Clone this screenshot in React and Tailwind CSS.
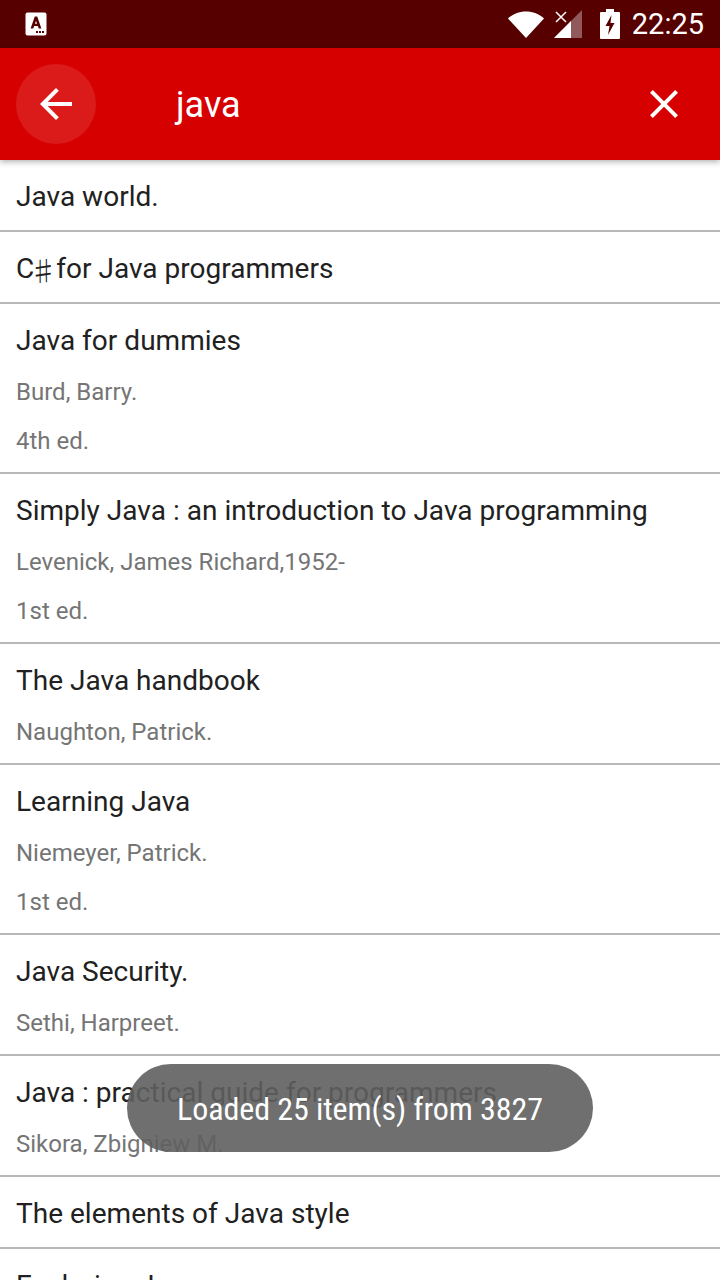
import React from "react";

const rows = [
  ["Java world."],
  [<span className="-translate-y-[2px]">C<span className="inline-block w-[15px] -indent-[5px] translate-y-[4px] font-['Noto_Sans_CJK_SC',sans-serif] font-light">♯</span> for Java programmers</span>],
  ["Java for dummies", "Burd, Barry.", "4th ed."],
  ["Simply Java : an introduction to Java programming", "Levenick, James Richard,1952-", "1st ed."],
  ["The Java handbook", "Naughton, Patrick."],
  ["Learning Java", "Niemeyer, Patrick.", "1st ed."],
  ["Java Security.", "Sethi, Harpreet."],
  ["Java : practical guide for programmers", "Sikora, Zbigniew M."],
  ["The elements of Java style"],
  ["Exploring Java"],
];

function Row({ lines }) {
  const [title, ...subs] = lines;
  return (
    <div className="border-b-2 border-[#b8b8b8] px-4">
      <div className="h-[70px] pt-1 flex items-center text-[28px] text-[#212121] leading-none tracking-[0.02px]">{title}</div>
      {subs.map((s) => (
        <div key={s} className="h-[49px] flex items-center -translate-y-[7px] text-[24px] text-[#757575] leading-none">{s}</div>
      ))}
    </div>
  );
}

export default function App() {
  return (
    <div className="relative w-[720px] h-[1280px] overflow-hidden bg-white font-['Roboto',sans-serif]">
      <div className="h-12 bg-[#570000] flex items-center pl-6 pr-4 text-white">
        <svg width="24" height="24" viewBox="0 0 24 24">
          <rect x="1.500" y="0.500" width="21" height="23" rx="2" fill="#fff" />
          <path d="M10.800 4.500 6.600 16.500h2.600l1-2.600h3.600l1 2.600h2.600L13.200 4.500zM11 11.800l1-3 1 3z" fill="#570000" />
          <path d="M12 19h2v2h-2zM15 19h2v2h-2zM18 19h2v2h-2z" fill="#570000" />
        </svg>
        <div className="flex-1" />
        <svg width="36" height="28" viewBox="0 0 36 28" className="mr-[10px] -mt-[1px]">
          <path d="M0 8.500C5 3.800 11 1.500 18 1.500s13 2.300 18 7L18 28z" fill="#fff" />
        </svg>
        <svg width="30" height="30" viewBox="0 0 30 30" className="mr-[16px] -mt-[1px]">
          <path d="M28 1v28H0z" fill="#fff" fillOpacity="0.35" />
          <path d="M17 12v17H0z" fill="#fff" />
          <path d="M2 3l10 10M12 3L2 13" stroke="#fff" strokeWidth="1.500" />
        </svg>
        <svg width="20" height="30" viewBox="0 0 20 30" className="mr-[12px] -mt-[1px]">
          <path d="M6 0h8v3h5a1 1 0 0 1 1 1v25a1 1 0 0 1-1 1H1a1 1 0 0 1-1-1V4a1 1 0 0 1 1-1h5z" fill="#fff" />
          <path d="M11.500 6 5.500 17h4l-1.500 9 6.500-12h-4z" fill="#570000" />
        </svg>
        <span className="text-[29px] leading-none">22:25</span>
      </div>

      <div className="relative z-10 h-[112px] bg-[#d60000] flex items-center pl-4 pr-[32px] shadow-[0_2px_6px_rgba(0,0,0,0.3)]">
        <div className="w-20 h-20 rounded-full bg-[#db1a1a] flex items-center justify-center text-white">
          <svg width="48" height="48" viewBox="0 0 24 24" fill="#fff">
            <path d="M20 11H7.830l5.590-5.590L12 4l-8 8 8 8 1.410-1.410L7.830 13H20z" />
          </svg>
        </div>
        <div className="ml-20 flex-1 text-[36px] text-white leading-none pt-[2px]">java</div>
        <svg width="48" height="48" viewBox="0 0 24 24" fill="#fff">
          <path d="M19 6.410 17.590 5 12 10.590 6.410 5 5 6.410 10.590 12 5 17.590 6.410 19 12 13.410 17.590 19 19 17.590 13.410 12z" />
        </svg>
      </div>

      <div>
        {rows.map((r, i) => (
          <Row key={i} lines={r} />
        ))}
      </div>

      <div className="absolute left-[127px] top-[1064px] w-[466px] h-[88px] rounded-[44px] bg-[#5f5f5f]/90 flex items-center justify-center">
        <span className="text-[32px] text-white leading-none whitespace-nowrap [font-stretch:75%] tracking-[-0.08px] pt-[2px]">Loaded 25 item(s) from 3827</span>
      </div>
    </div>
  );
}
